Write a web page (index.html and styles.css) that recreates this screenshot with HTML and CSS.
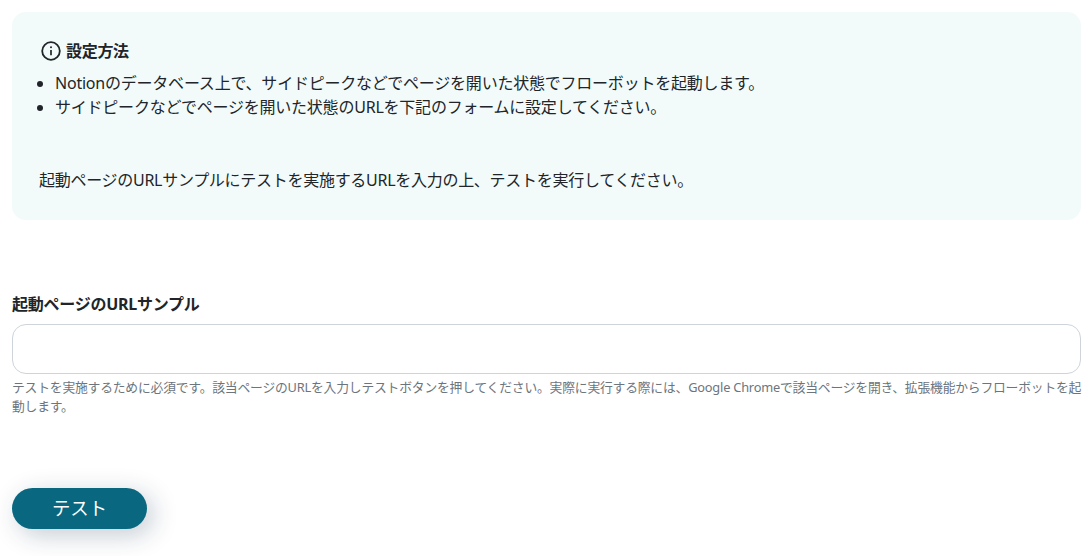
FILE: index.html
```html
<!DOCTYPE html>
<html lang="ja">
<head>
    <meta charset="UTF-8">
    <title>テスト</title>
    <link rel="stylesheet" href="styles.css">
</head>
<body>
    <div class="info-box">
        <div class="info-title">
            <svg class="info-icon" width="20" height="20" viewBox="0 0 20 20" fill="none" stroke="#212529">
                <circle cx="10" cy="10" r="8.8" stroke-width="1.8"/>
                <path d="M10 9v5.2" stroke-width="1.7"/>
                <circle cx="10" cy="6.3" r="1" fill="#212529" stroke="none"/>
            </svg>
            <span>設定方法</span>
        </div>
        <ul class="info-list">
            <li>Notionのデータベース上で、サイドピークなどでページを開いた状態でフローボットを起動します。</li>
            <li>サイドピークなどでページを開いた状態のURLを下記のフォームに設定してください。</li>
        </ul>
        <p class="info-note">起動ページのURLサンプルにテストを実施するURLを入力の上、テストを実行してください。</p>
    </div>
    <form class="test-form">
        <label for="sampleUrl">起動ページのURLサンプル</label>
        <input id="sampleUrl" class="url-input" type="text">
        <small class="help">テストを実施するために必須です。該当ページのURLを入力しテストボタンを押してください。実際に実行する際には、Google Chromeで該当ページを開き、拡張機能からフローボットを起<br>動します。</small>
        <button class="test-btn" type="button">テスト</button>
    </form>
</body>
</html>
```

FILE: styles.css
```css
* {
    box-sizing: border-box;
}
body {
    min-height: 556px;
    margin: 0;
    padding: 12px 11px 0 12px;
    background-color: #fff;
    color: #212529;
    font-family: "Noto Sans", "Noto Sans CJK JP", sans-serif;
    font-size: 16px;
    line-height: 24px;
}
.info-box {
    height: 208px;
    padding: 27px 27px 0;
    background-color: #f2fbfa;
    border-radius: 14px;
}
.info-title {
    display: flex;
    align-items: center;
    gap: 5px;
    height: 24px;
    padding-left: 2px;
    font-weight: bold;
    letter-spacing: -0.3px;
}
.info-list {
    margin: 8px 0 0;
    padding-left: 16px;
    letter-spacing: -0.22px;
    white-space: nowrap;
}
.info-note {
    margin: 49px 0 0;
    letter-spacing: -0.28px;
    white-space: nowrap;
}
.test-form {
    margin-top: 72px;
}
label {
    display: block;
    font-weight: bold;
    letter-spacing: -0.25px;
}
.url-input {
    display: block;
    width: 100%;
    height: 50px;
    margin-top: 8px;
    padding: 8px 16px;
    border: 1px solid #ced4da;
    border-radius: 14px;
}
.help {
    display: block;
    margin-top: 4px;
    color: #6c757d;
    font-size: 12.8px;
    line-height: 19px;
    letter-spacing: -0.2px;
    white-space: nowrap;
}
.test-btn {
    display: block;
    width: 135px;
    height: 41px;
    margin-top: 72px;
    padding: 0 0 3px;
    border: none;
    border-radius: 21px;
    background-color: #0a6780;
    box-shadow: 6px 6px 26px rgba(10, 40, 70, 0.24);
    color: #fff;
    font-family: inherit;
    font-size: 18.4px;
    cursor: pointer;
}
```
